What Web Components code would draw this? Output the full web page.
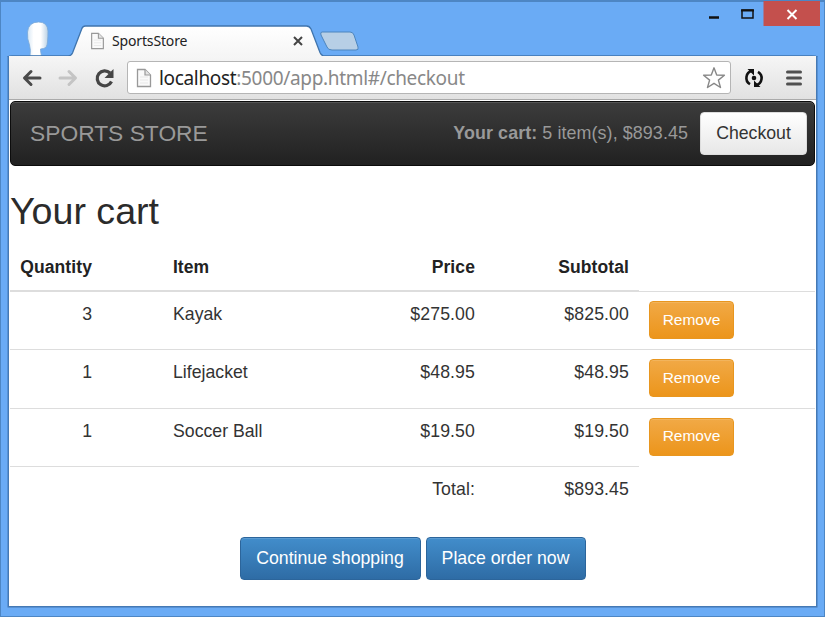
<!DOCTYPE html>
<html lang="en">
<head>
<meta charset="utf-8">
<title>SportsStore</title>
<style>
html, body { margin: 0; padding: 0; }
body { width: 825px; height: 617px; overflow: hidden; font-family: "Liberation Sans", Arial, sans-serif; }
</style>
</head>
<body>
<browser-window></browser-window>
<script>
const define = (name, html, init) => customElements.define(name, class extends HTMLElement {
  constructor() {
    super();
    this.attachShadow({ mode: 'open' }).innerHTML = html;
  }
  connectedCallback() { if (init) init(this, this.shadowRoot); }
});

define('page-icon', `
<style>:host{display:block;width:16px;height:20px}svg{display:block;width:100%;height:100%}</style>
<svg viewBox="0 0 16 20"><path d="M1.5 1.5h7.5l5.500 5.500v11.500h-13z" fill="#fafafa" stroke="#999" stroke-width="1.300"/><path d="M9 1.500v5.500h5.500" fill="#e4e4e4" stroke="#999" stroke-width="1.200"/><path d="M4 9h8M4 12h8M4 15h8" stroke="#e8e8e8"/></svg>`);

define('title-bar', `
<style>
:host{display:flex;height:56px;width:100%;position:relative}
.bg{position:absolute;left:0;top:0}
.avatar{width:71px;flex:none}
.tab{position:relative;width:245px;display:flex;align-items:center;padding:26px 0 0 19px;box-sizing:border-box;height:56px}
page-icon{width:15px;height:18px}
.name{font:14px/20px "Noto Sans","Open Sans",sans-serif;color:#222;margin-left:7px;width:80px;letter-spacing:-.15px;white-space:nowrap}
.x{margin-left:101px;width:10px;height:10px}
.controls{position:relative;margin-left:auto;display:flex;height:26px;margin-right:5px}
.controls svg{display:block}
</style>
<svg class="bg" width="825" height="57" viewBox="0 0 825 57">
 <defs><linearGradient id="t" x1="0" y1="0" x2="0" y2="1"><stop offset="0" stop-color="#fff"/><stop offset="1" stop-color="#f5f5f5"/></linearGradient>
 <linearGradient id="h"><stop offset="0" stop-color="#d7e7f4"/><stop offset=".3" stop-color="#fff"/><stop offset=".65" stop-color="#fff"/><stop offset="1" stop-color="#b9d1e5"/></linearGradient></defs>
 <path d="M30 56q1-6-.5-11q-2.500-6-2-13q1-10 11-10q9 0 9.500 9q0 6-.5 11q-.5 6-4 6.500l-3 .5q0 3 1 7z" fill="url(#h)" stroke="#78a8d8" stroke-width=".8"/>
 <path d="M8 57q1-1 4-1h56q3 0 4.500-3l9-23.500q1-3.500 4-3.500h221q3 0 4.500 3l9 23.500q1.500 3.500 5 3.500h487q4 0 5 1z" fill="url(#t)" stroke="#3f74ad" stroke-width="1.300"/>
 <path d="M322 32h28q3 0 4 3l4 12q1 3-2 3h-24q-4 0-5-3l-6-12q-1-3 1-3z" fill="#b7cfe6" stroke="#4c85be"/>
</svg>
<div class="avatar"></div>
<div class="tab"><page-icon></page-icon><span class="name">SportsStore</span>
<svg class="x" viewBox="0 0 10 10"><path d="M1 1l8 8M9 1L1 9" stroke="#444" stroke-width="2"/></svg></div>
<div class="controls"><svg width="123" height="26" viewBox="-3 0 123 26"><path d="M9 17.500h10" stroke="#111" stroke-width="2.500"/><path d="M42 10h11v8H42z" fill="none" stroke="#111" stroke-width="1.500"/><path d="M41 10.500h13" stroke="#111" stroke-width="2"/><path d="M63.500 1h56.500v25h-56.500z" fill="#c4504d"/><path d="M87.500 10l9 9M96.500 10l-9 9" stroke="#fff" stroke-width="2"/></svg></div>`);

define('address-bar', `
<style>
:host{display:flex;flex:none;height:44px;box-sizing:border-box;padding:5px 12px 5px 12px;background:linear-gradient(#f6f6f6,#e1e1e1);border-bottom:1px solid #aaa;align-items:center}
svg{display:block;flex:none}
.nav{width:106px}
.field{flex:none;width:604px;height:33px;box-sizing:border-box;border:1px solid #b5b5b5;border-radius:3px;background:#fff;display:flex;align-items:center;padding:0 4px 0 8px}
page-icon{width:16px;height:20px}
.url{flex:1;margin-left:7px;font:19px/28px "Noto Sans","Open Sans",sans-serif;color:#888;white-space:nowrap;letter-spacing:-.33px}
b{font-weight:400;color:#222}
.sync{margin-left:13px}.menu{margin-left:21px}
</style>
<svg class="nav" height="34" viewBox="0 0 106 34" fill="none"><g stroke-width="3" stroke-linecap="round" stroke-linejoin="round"><path d="M4 17h15M10 10.500L3.500 17l6.500 6.500" stroke="#4a4a4a"/><path d="M39 17h15M48 10.500l6.500 6.500-6.500 6.500" stroke="#c4c4c4"/></g><path d="M89 12a7.500 7.500 0 1 0 1.500 8.500" stroke="#454545" stroke-width="3.200"/><path d="M92.500 8v9h-9z" fill="#454545"/></svg>
<div class="field"><page-icon></page-icon><span class="url"><b>localhost</b>:5000/app.html#/checkout</span>
<svg width="24" height="24" viewBox="0 0 24 24"><path d="M12 1.800l2.700 7.200 7.700.3-6 4.800 2.100 7.400L12 17.300l-6.500 4.200 2.100-7.400-6-4.800 7.700-.3z" fill="#fff" stroke="#888" stroke-width="1.400" stroke-linejoin="round"/></svg></div>
<svg class="sync" width="20" height="20" viewBox="0 0 20 20"><path d="M8 2.800A7.300 7.300 0 0 0 6 16.200M12 17.200A7.300 7.300 0 0 0 14 3.800" fill="none" stroke="#111" stroke-width="2.600"/><path d="M3.500 1H10v6.500zM16.500 19H10v-6.500z" fill="#111"/><circle cx="10" cy="10" r="2.300" fill="#111"/></svg>
<svg class="menu" width="18" height="18" viewBox="0 0 18 18"><path d="M2.500 3h13M2.500 9h13M2.500 15h13" stroke="#505050" stroke-width="3" stroke-linecap="round"/></svg>`);

define('ui-button', `
<style>
:host{display:flex;align-items:center;justify-content:center;box-sizing:border-box;border-radius:4px;height:43px;font-size:17.700px;line-height:20px;white-space:nowrap}
:host([kind=primary]){color:#fff;background:linear-gradient(#428dcb,#2e6ca5);border:1px solid #2c659b;box-shadow:inset 0 1px #5b9bd2}
:host([kind=warning]){color:#fff;background:linear-gradient(#f1a946,#ec951b);border:1px solid #e8961f;box-shadow:inset 0 1px #f2b45c;font-size:15.500px;width:85px;height:38px;padding-bottom:1px}
:host([kind=plain]){color:#333;background:linear-gradient(#fff,#e7e7e7);border:1px solid #ddd;width:107px}
</style><slot></slot>`);

define('store-header', `
<style>
:host{display:flex;align-items:center;flex:none;height:65px;box-sizing:border-box;border:1px solid #0c0c0c;border-radius:5px;background:linear-gradient(#3c3c3c,#212121);box-shadow:inset 0 1px #555;padding:0 7px 1px 19px;color:#999}
.brand{font-size:22.800px;margin-right:auto}
.cart{font-size:17.900px;margin-right:12px;white-space:nowrap;letter-spacing:.08px}
</style>
<span class="brand">SPORTS STORE</span><span class="cart"><b>Your cart:</b> 5 item(s), $893.45</span><ui-button kind="plain">Checkout</ui-button>`);

define('cart-row', `
<style>
:host{display:grid;grid-template-columns:153px 167px 155px 154px 1fr;height:58.400px;font-size:17.700px;line-height:25px;color:#333}
div{box-sizing:border-box;padding:10px 10px 0;border-top:1px solid #ddd;text-align:right;white-space:nowrap}
.q{padding-right:71px}.i{text-align:left}
.p,.s{letter-spacing:.1px}
.a{padding-top:9px}
:host([head]){height:47px;font-weight:700;font-size:17.500px;color:#222}
:host([head]) div{border-top:0;padding-top:11px;border-bottom:1px solid #ddd}
:host([head]) .q{letter-spacing:.1px}
:host([head]) .a{border-bottom:0}
:host([total]) .a{border-top:0}
</style>
<div class="q"><slot name="q"></slot></div><div class="i"><slot name="i"></slot></div><div class="p"><slot name="p"></slot></div><div class="s"><slot name="s"></slot></div><div class="a"><slot name="a"></slot></div>`);

define('cart-table', `<style>:host{display:block}</style><div id="rows"></div>`, (host, root) => {
  const rows = [['3','Kayak','$275.00','$825.00'],['1','Lifejacket','$48.95','$48.95'],['1','Soccer Ball','$19.50','$19.50']];
  const row = (attr, c, action) => `<cart-row ${attr}>` +
    ['q','i','p','s'].map((s, n) => `<span slot="${s}">${c[n]}</span>`).join('') +
    (action ? '<ui-button slot="a" kind="warning">Remove</ui-button>' : '') + '</cart-row>';
  root.getElementById('rows').innerHTML = row('head', ['Quantity','Item','Price','Subtotal']) +
    rows.map(r => row('', r, true)).join('') + row('total', ['', '', 'Total:', '$893.45']);
});

define('store-page', `
<style>
:host{display:flex;flex-direction:column;flex:1;background:#fff;padding:1px 1px 0 1px;min-height:0}
h1{margin:20px 0 0;font-size:37.600px;font-weight:400;line-height:50px;color:#2b2b2b;height:58px;white-space:nowrap}
.actions{display:flex;justify-content:center;gap:5px;margin-top:12.400px}
.c{width:181px}.o{width:160px}
</style>
<store-header></store-header><h1>Your cart</h1><cart-table></cart-table>
<div class="actions"><ui-button class="c" kind="primary">Continue shopping</ui-button><ui-button class="o" kind="primary">Place order now</ui-button></div>`);

define('browser-window', `
<style>
:host{display:flex;flex-direction:column;width:825px;height:617px;box-sizing:border-box;background:#6aabf5;box-shadow:inset 0 0 0 1px #4d86c4,inset 0 1px 0 1px #4d86c4}
.client{display:flex;flex-direction:column;height:550px;width:807px;margin-left:9px;box-shadow:0 0 0 1.500px #4579b4;background:#fff;clip-path:inset(0 -3px -3px -3px)}
</style>
<title-bar></title-bar><div class="client"><address-bar></address-bar><store-page></store-page></div>`);
</script>
</body>
</html>
